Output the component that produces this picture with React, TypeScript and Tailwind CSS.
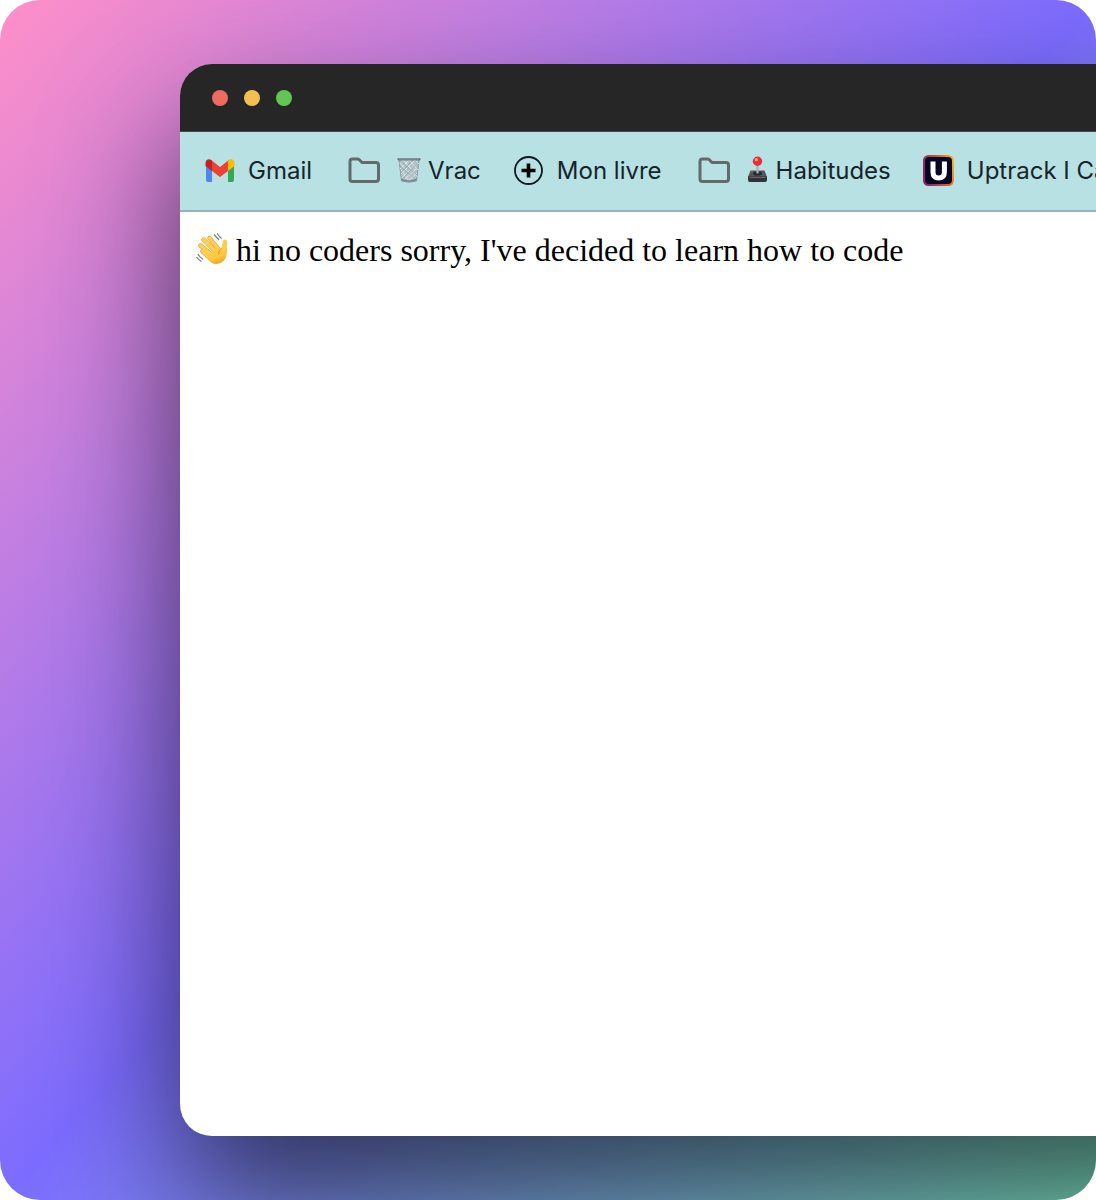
import type { ReactNode } from 'react';

function GmailIcon() {
  return (
    <svg className="h-8 w-8 shrink-0" viewBox="0 0 32 32" aria-hidden="true">
      <path d="M2 7v18Q2 27 4 27H8V11z" fill="#4c86f0" />
      <path d="M30 7v18Q30 27 28 27H24V11z" fill="#36a853" />
      <path d="M6.500 4.500l9.500 7.500 9.500-7.500L24 16l-8 6-8-6z" fill="#ea4335" />
      <path d="M24 16V5.700L25 5q2-1.200 3.800-.3 1.700.9 1.700 3V11z" fill="#fbbc06" />
      <path d="M8 16V5.700L7 5Q5 3.800 3.200 4.700q-1.700.9-1.700 3V11z" fill="#c5221f" />
    </svg>
  );
}

function FolderIcon() {
  return (
    <svg className="mr-1 h-8 w-9 shrink-0" viewBox="0 0 36 32" fill="none" aria-hidden="true">
      <path
        d="M6 6.500Q6 4 8.500 4h5q1 0 1.800.8L18 7.500h14q2.500 0 2.500 2.500v14q0 2.500-2.500 2.500H8.500Q6 26.500 6 24z"
        stroke="#626a6d"
        strokeWidth="3"
        strokeLinejoin="round"
      />
    </svg>
  );
}

function PlusIcon() {
  return (
    <svg className="h-8 w-8 shrink-0" viewBox="0 0 32 32" fill="none" aria-hidden="true">
      <circle cx="15.500" cy="15.500" r="13.500" stroke="#10191d" strokeWidth="1.800" />
      <path d="M15.500 8.500v14M8.500 15.500h14" stroke="#000" strokeWidth="3.600" />
    </svg>
  );
}

function UptrackIcon() {
  return (
    <svg className="h-8 w-8 shrink-0" viewBox="0 0 32 32" fill="none" aria-hidden="true">
      <defs>
        <linearGradient id="uptrack" x1="0" y1="0.300" x2="1" y2="0">
          <stop offset="0" stopColor="#8c285c" />
          <stop offset="0.550" stopColor="#d8583c" />
          <stop offset="1" stopColor="#fbc41c" />
        </linearGradient>
      </defs>
      <rect x="0" y="0" width="31" height="31" rx="5.500" fill="url(#uptrack)" />
      <rect x="2" y="2" width="27" height="27" rx="4" fill="#080522" />
      <path d="M10 6.500V17q0 6 5.700 6t5.700-6V6.500" stroke="#fff" strokeWidth="5" />
    </svg>
  );
}

function TrashIcon() {
  return (
    <svg className="h-8 w-[26px] shrink-0" viewBox="0 0 26 32" fill="none" aria-hidden="true">
      <path d="M3 4.500h20L20.500 26q-7.500 2.500-15 0z" fill="#b2c3c7" stroke="#89999e" />
      <path
        d="M3.500 9l4-4 14 17M4 14L13 5l9 10M5 19L19 5l4 4M5.500 23L22 8M7 26l14-13M11 27l10-9M4 8l15 18M5 15l9 12"
        stroke="#d8e4e6"
        strokeWidth="1"
      />
      <path d="M4 11l17 15M4 6l17 14M5.500 25L22.500 7M4.500 18L17 5" stroke="#8d9da2" strokeWidth="0.700" />
      <path d="M5.500 24.500q7.500 3 15 0" stroke="#74858b" strokeWidth="1.500" />
      <rect x="1.500" y="3" width="23" height="2.400" rx="1.200" fill="#6b7a7f" />
      <path d="M3 3.800h20" stroke="#a4b2b6" strokeWidth="0.700" />
    </svg>
  );
}

function JoystickIcon() {
  return (
    <svg className="h-8 w-6 shrink-0" viewBox="0 0 24 32" aria-hidden="true">
      <path d="M4.500 15.500h14L21 22H2z" fill="#53565d" />
      <path d="M2 21.500h19V25q0 2-2 2H4q-2 0-2-2z" fill="#30343b" />
      <ellipse cx="11.500" cy="18.500" rx="4.500" ry="2" fill="#25282e" />
      <path d="M10.400 10h2.200v8.500h-2.200z" fill="#a9b2b5" />
      <rect x="4" y="16" width="3" height="1.400" rx="0.700" fill="#a5524f" />
      <path d="M3.500 22.500h16" stroke="#7e6668" strokeWidth="0.900" />
      <circle cx="11.500" cy="6.300" r="4.700" fill="#e72f36" />
      <circle cx="10.300" cy="4.700" r="1.600" fill="#ff979a" />
    </svg>
  );
}

function WaveIcon() {
  return (
    <svg className="h-9 w-8 shrink-0" viewBox="0 0 32 36" fill="none" aria-hidden="true">
      <defs>
        <linearGradient id="palm" x1="0.300" y1="0" x2="0.600" y2="1">
          <stop offset="0" stopColor="#ffd052" />
          <stop offset="0.700" stopColor="#fdc840" />
          <stop offset="1" stopColor="#ee9f2c" />
        </linearGradient>
      </defs>
      <g stroke="#d9942c" strokeWidth="4.400" strokeLinecap="round">
        <path d="M6.500 19.500l9 7.500" />
        <path d="M4.500 13.500L17 24" />
        <path d="M7.500 7.500L20 20" />
        <path d="M13.500 6l9.500 12" />
      </g>
      <g stroke="#ffd052" strokeWidth="3.500" strokeLinecap="round">
        <path d="M6.500 19.500l9 7.500" />
        <path d="M4.500 13.500L17 24" />
        <path d="M7.500 7.500L20 20" />
        <path d="M13.500 6l9.500 12" />
      </g>
      <path
        d="M12 24.500l2-4 4-3.500 4-2 3 1.800q.9-1.800 1.300-5 .5-4.300 3-4.300 2.500.3 2 3.800-.6 3.200-.3 6.700.3 7.500-3.500 11-3.700 3.500-8 3.200-3.500-.4-7.500-4.200z"
        fill="url(#palm)"
      />
      <path d="M25.300 16.500q-3 2-2.700 5.500" stroke="#dd9a30" strokeWidth="1" strokeLinecap="round" />
      <path
        d="M18.500 3q1.800 2.200 4.200 4.500M21.300 1.700q1.600 2.600 4 4.500M2.200 22.500q1.500 2.700 4.500 4.500M.9 25.500q1.600 2.200 4.200 3.700"
        stroke="#777d84"
        strokeWidth="1.200"
        strokeLinecap="round"
      />
    </svg>
  );
}

function Bookmark({ icon, children }: { icon: ReactNode; children: ReactNode }) {
  return (
    <a href="#" className="flex shrink-0 items-center gap-3 whitespace-nowrap">
      {icon}
      <span className="flex items-center gap-1.5">{children}</span>
    </a>
  );
}

export default function App() {
  return (
    <div className="bg-white">
      <div className="flex min-h-screen flex-col overflow-hidden rounded-[40px] bg-[linear-gradient(to_bottom_right,#ff8fc8,#7c6cff_50%,#84eccb)] pt-16 pb-16 pl-[180px]">
        {/* the window runs off the right edge of the backdrop */}
        <div className="-mr-40 flex flex-1 flex-col rounded-[32px] bg-white shadow-[0_70px_130px_rgba(0,0,0,0.62)]">
          <div className="flex h-[68px] shrink-0 items-center gap-4 rounded-t-[32px] border-b border-[#44494a] bg-[#262626] px-8">
            <button type="button" aria-label="Close" className="h-4 w-4 rounded-full bg-[#ed6b60]" />
            <button type="button" aria-label="Minimize" className="h-4 w-4 rounded-full bg-[#f5bf4f]" />
            <button type="button" aria-label="Zoom" className="h-4 w-4 rounded-full bg-[#62c655]" />
          </div>

          <nav className="flex h-20 shrink-0 items-center gap-8 overflow-hidden border-b-2 border-[#97b4b8] bg-[#b7e1e2] pl-6 font-['Inter',sans-serif] text-2xl text-[#16242b]">
            <Bookmark icon={<GmailIcon />}>Gmail</Bookmark>
            <Bookmark icon={<FolderIcon />}>
              <TrashIcon />
              Vrac
            </Bookmark>
            <Bookmark icon={<PlusIcon />}>Mon livre</Bookmark>
            <Bookmark icon={<FolderIcon />}>
              <JoystickIcon />
              Habitudes
            </Bookmark>
            <Bookmark icon={<UptrackIcon />}>Uptrack I Ca</Bookmark>
          </nav>

          <main className="flex-1 p-4">
            <p className="flex items-center gap-2 font-['Liberation_Serif',serif] text-[32px] leading-11 text-black">
              <WaveIcon />
              hi no coders sorry, I've decided to learn how to code
            </p>
          </main>
        </div>
      </div>
    </div>
  );
}
